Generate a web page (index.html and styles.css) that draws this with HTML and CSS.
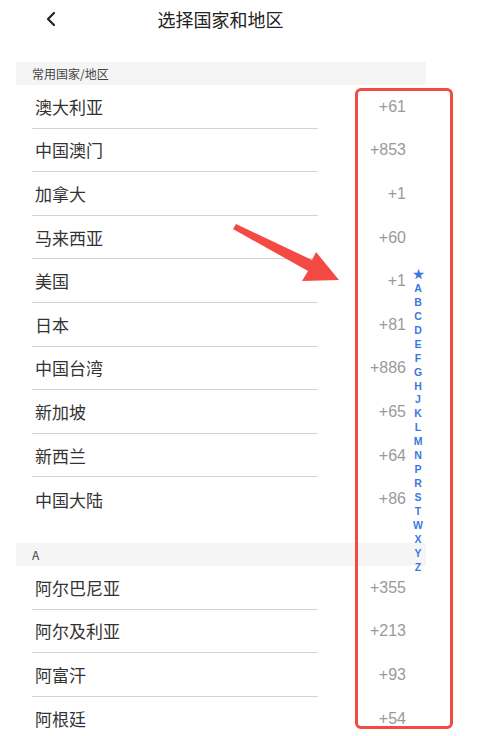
FILE: index.html
```html
<!DOCTYPE html>
<html lang="zh">
<head>
<meta charset="utf-8"/>
<title>选择国家和地区</title>
<meta content="width=device-width, initial-scale=1" name="viewport"/>
<link rel="stylesheet" href="styles.css">
</head>
<body>
<!-- Шапка -->
<div class="header">
  <svg class="back" width="12" height="16" viewBox="0 0 12 16"><path d="M9 2 L3 8 L9 14" fill="none" stroke="#222" stroke-width="2.2" stroke-linecap="round" stroke-linejoin="round"/></svg>
  <div class="title">选择国家和地区</div>
</div>

<div class="list">
  <div class="section">
    <div class="section-title">常用国家/地区</div>
    <div class="row"><div class="name">澳大利亚</div><div class="code">+61</div></div>
    <div class="row"><div class="name">中国澳门</div><div class="code">+853</div></div>
    <div class="row"><div class="name">加拿大</div><div class="code">+1</div></div>
    <div class="row"><div class="name">马来西亚</div><div class="code">+60</div></div>
    <div class="row"><div class="name">美国</div><div class="code">+1</div></div>
    <div class="row"><div class="name">日本</div><div class="code">+81</div></div>
    <div class="row"><div class="name">中国台湾</div><div class="code">+886</div></div>
    <div class="row"><div class="name">新加坡</div><div class="code">+65</div></div>
    <div class="row"><div class="name">新西兰</div><div class="code">+64</div></div>
    <div class="row last"><div class="name">中国大陆</div><div class="code">+86</div></div>
  </div>
  <div class="section">
    <div class="section-title">A</div>
    <div class="row"><div class="name">阿尔巴尼亚</div><div class="code">+355</div></div>
    <div class="row"><div class="name">阿尔及利亚</div><div class="code">+213</div></div>
    <div class="row"><div class="name">阿富汗</div><div class="code">+93</div></div>
    <div class="row"><div class="name">阿根廷</div><div class="code">+54</div></div>
  </div>
</div>

<!-- Алфавитный указатель -->
<div class="index">
  <span>★</span><span>A</span><span>B</span><span>C</span><span>D</span><span>E</span><span>F</span><span>G</span><span>H</span><span>J</span><span>K</span><span>L</span><span>M</span><span>N</span><span>P</span><span>R</span><span>S</span><span>T</span><span>W</span><span>X</span><span>Y</span><span>Z</span>
</div>

<!-- Пометки -->
<div class="mark-box"></div>
<svg class="mark-arrow" width="120" height="70" viewBox="0 0 120 70">
  <path d="M11 11 L14 6 L90 42 L94 34 L117 62 L80 63 L86 53 Z" fill="#f44a44"/>
</svg>
</body>
</html>
```

FILE: styles.css
```css
body {
    margin: 0;
    background: #fff;
    font-family: "Noto Sans CJK SC", "Noto Sans", sans-serif;
    color: #333;
    overflow: hidden;
}

.header {
    height: 38px;
    display: flex;
    align-items: center;
    justify-content: center;
    position: relative;
}

.back {
    position: absolute;
    left: 45px;
    top: 11px;
}

.title {
    font-size: 18px;
    color: #222;
    margin-right: 44px;
}

.list {
    margin-top: 24px;
    padding: 0 59px 0 16px;
}

.section {
    padding-bottom: 22px;
}

.section-title {
    height: 23px;
    line-height: 23px;
    background: #f5f5f5;
    padding-left: 16px;
    font-size: 12px;
    color: #444;
}

.row {
    height: 43.6px;
    display: flex;
    margin-left: 16px;
}

.name {
    width: 286px;
    box-sizing: border-box;
    padding-left: 3px;
    display: flex;
    align-items: center;
    font-size: 17px;
    color: #333;
    border-bottom: 1px solid #d3d3d3;
}

.last .name {
    border-bottom: none;
}

.code {
    flex: 1;
    display: flex;
    align-items: center;
    justify-content: flex-end;
    padding-right: 20px;
    font-family: "Liberation Sans", Arial, sans-serif;
    font-size: 16px;
    color: #9a9a9a;
}

.index {
    position: absolute;
    left: 410px;
    top: 268px;
    width: 16px;
    display: flex;
    flex-direction: column;
    align-items: center;
    font-family: "Liberation Sans", Arial, sans-serif;
    font-size: 10.5px;
    font-weight: bold;
    color: #3b78de;
}

.index span {
    height: 13.95px;
    line-height: 13.95px;
}

.mark-box {
    position: absolute;
    left: 355px;
    top: 88px;
    width: 92px;
    height: 635px;
    border: 3px solid #f24a45;
    border-radius: 6px;
}

.mark-arrow {
    position: absolute;
    left: 222px;
    top: 218px;
}
```
